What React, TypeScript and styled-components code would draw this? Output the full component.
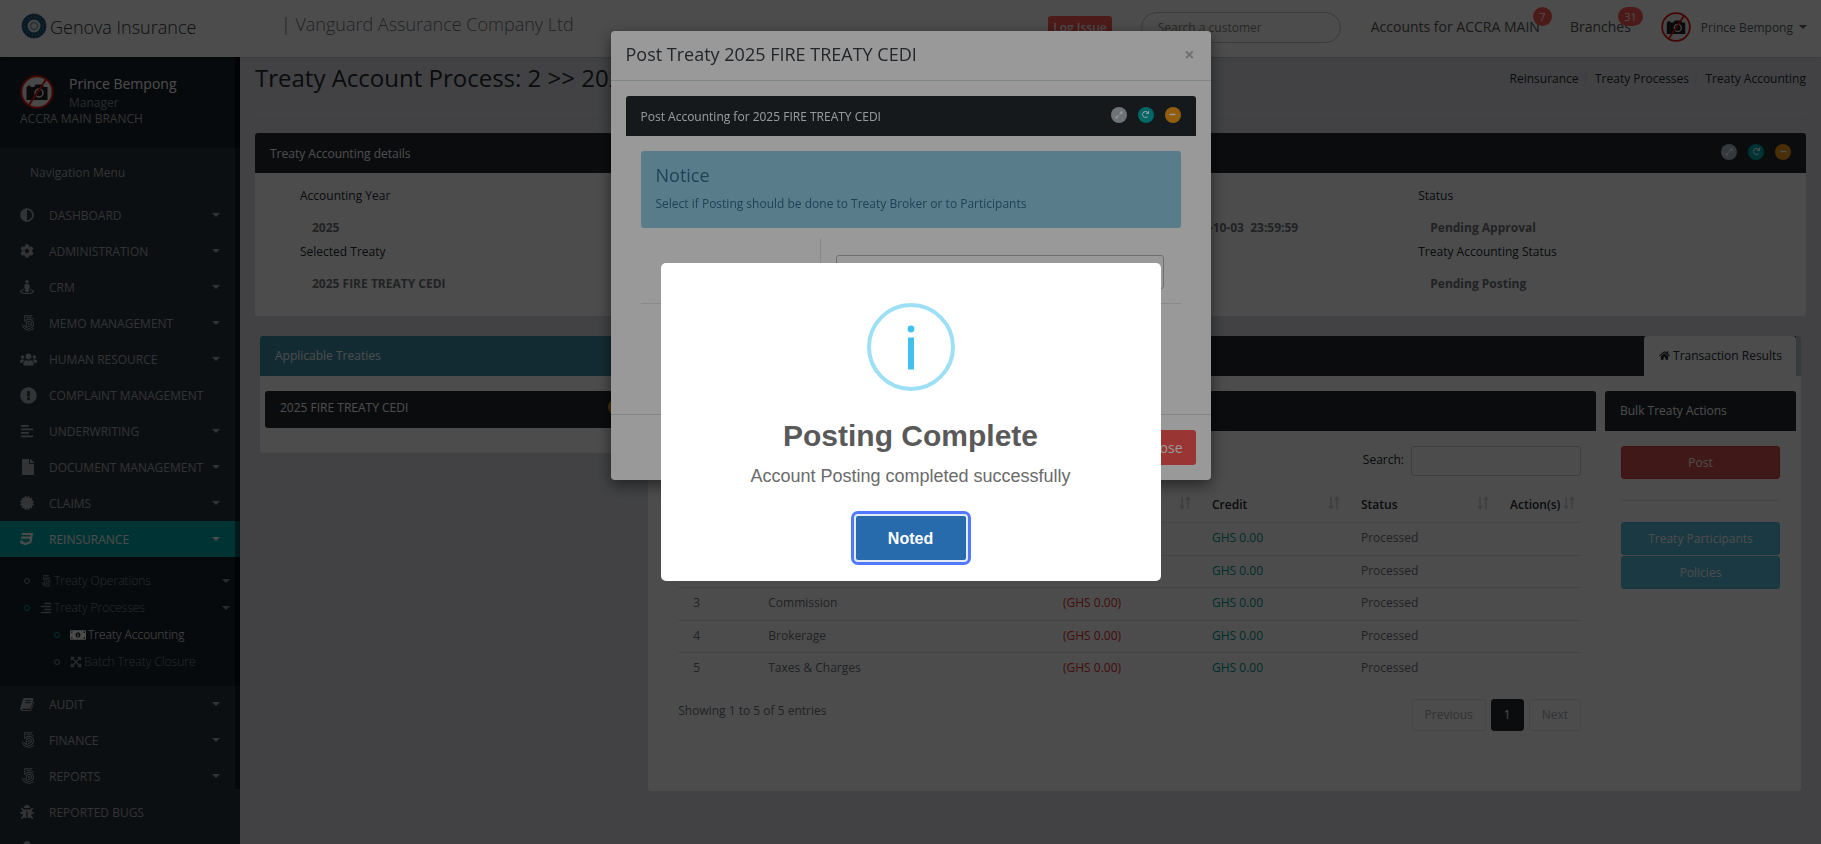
import React from "react";
import styled, { createGlobalStyle, css } from "styled-components";
import {
  Fa500Px,
  FaAdjust,
  FaAlignLeft,
  FaAlignRight,
  FaBug,
  FaCertificate,
  FaCog,
  FaCss3,
  FaExclamationCircle,
  FaExpandAlt,
  FaExpandArrowsAlt,
  FaFile,
  FaHome,
  FaMinus,
  FaMoneyBillAlt,
  FaRedo,
  FaStreetView,
  FaUser,
  FaUsers,
} from "react-icons/fa";

const GlobalStyle = createGlobalStyle`
  *, *::before, *::after { box-sizing: border-box; }
  body {
    margin: 0;
    background: #dcdfe4;
    color: #707478;
    font-family: "Open Sans", "Liberation Sans", sans-serif;
    font-size: 12px;
    line-height: 17px;
  }
  a { color: inherit; text-decoration: none; }
  button, input, select { font: inherit; }
  ul, ol { list-style: none; margin: 0; padding: 0; }
  h1, h2, h3, h4, p, dl, dd, hr { margin: 0; }
`;

/* ---------- page frame ---------- */

const Page = styled.div`
  display: flex;
  flex-direction: column;
  height: 100vh;
  overflow: hidden;
`;

const Header = styled.header`
  display: flex;
  align-items: center;
  flex: none;
  height: 57px;
  padding: 0 14px 3px 21px;
  background: #fff;
  box-shadow: 0 0 2px rgba(0, 0, 0, 0.3);
  z-index: 1;
`;

const Brand = styled.a`
  display: flex;
  align-items: center;
  gap: 3px;
  width: 260px;
  color: #333;
  font-size: 18px;
  font-weight: 300;
  line-height: 25px;
  svg { margin-bottom: 3px; }
`;

const Company = styled.div`
  flex: 1;
  padding-bottom: 5px;
  color: #707478;
  font-size: 18px;
  font-weight: 300;
  line-height: 25px;
`;

const LogIssue = styled.button`
  height: 22px;
  padding: 0 5px;
  border: 0;
  border-radius: 3px;
  background: #ff5b57;
  color: #fff;
  font-weight: 600;
`;

const CustomerSearch = styled.input`
  width: 200px;
  height: 31px;
  margin: 0 30px 0 29px;
  padding: 0 16px;
  border: 1px solid #c0c4c8;
  border-radius: 16px;
  background: #fff;
  color: #555;
  &::placeholder { color: #888; opacity: 1; }
`;

const HeaderLink = styled.a`
  position: relative;
  margin-right: 30px;
  color: #555;
  font-size: 14px;
  line-height: 20px;
`;

const Badge = styled.span`
  position: absolute;
  top: -10px;
  right: -12px;
  min-width: 19px;
  padding: 0 6px;
  border-radius: 10px;
  background: #ff5b57;
  color: #fff;
  font-size: 11px;
  line-height: 19px;
  text-align: center;
`;

const UserMenu = styled.button`
  display: flex;
  align-items: center;
  padding: 0;
  border: 0;
  background: none;
  color: #585f66;
  span { margin: 0 6px 0 10px; }
`;

const Caret = styled.i`
  border: 4px solid transparent;
  border-top-color: currentColor;
  border-bottom: 0;
`;

const Main = styled.div`
  display: flex;
  flex: 1;
  min-height: 0;
`;

/* ---------- sidebar ---------- */

const Sidebar = styled.aside`
  position: relative;
  flex: none;
  width: 240px;
  overflow: hidden;
  background: #28353c;
  color: #a8acb1;
`;

const ScrollThumb = styled.div`
  position: absolute;
  top: 0;
  right: 0;
  width: 5px;
  height: 93%;
  background: rgba(0, 0, 0, 0.5);
`;

const Profile = styled.div`
  height: 91px;
  padding: 17px 20px 0;
  background: #1a2229;
`;

const ProfileTop = styled.div`
  display: flex;
  gap: 15px;
  height: 36px;
  color: #889097;
  strong {
    display: block;
    color: #fff;
    font-size: 14px;
    font-weight: 400;
    line-height: 20px;
  }
  svg { margin-top: 1px; }
`;

const NavTitle = styled.div`
  padding: 16px 30px;
`;

const NavLink = styled.a<{ $active?: boolean }>`
  display: flex;
  align-items: center;
  height: 36px;
  padding: 0 20px;
  white-space: nowrap;
  ${(p) => p.$active && css`background: #00acac; color: #fff;`}
  > span { flex: 1; }
`;

const NavIcon = styled.i`
  display: flex;
  flex: none;
  width: 29px;
`;

const SubMenu = styled.ul`
  padding: 10px 0 11px 27px;
  background: #1a2229;
  > ul { margin-left: 30px; }
`;

const SubLink = styled.a<{ $current?: boolean; $open?: boolean }>`
  display: flex;
  align-items: center;
  gap: 2px;
  height: 27px;
  padding-right: 10px;
  color: ${(p) => (p.$current ? "#fff" : "#889097")};
  font-weight: 300;
  &::before {
    content: "";
    width: 6px;
    height: 6px;
    margin: 0 8px 0 -3px;
    border: 1px solid ${(p) => (p.$current || p.$open ? "#00acac" : "#889097")};
    border-radius: 50%;
  }
  > span { flex: 1; }
`;

/* ---------- content ---------- */

const Content = styled.main`
  flex: 1;
  min-width: 0;
  padding: 4px 15px 0;
`;

const PageTop = styled.div`
  display: flex;
  justify-content: space-between;
  height: 53px;
  margin-bottom: 19px;
  border-bottom: 1px solid #e2e7eb;
  h1 {
    color: #242a30;
    font-size: 24px;
    font-weight: 400;
    line-height: 33px;
  }
`;

const Breadcrumb = styled.ol`
  display: flex;
  padding-top: 9px;
  color: #242a30;
  li + li::before {
    content: "/";
    padding: 0 7px 0 5px;
    color: #c5ccd3;
  }
`;

const Panel = styled.section`
  border-radius: 3px;
  background: #fff;
`;

const PanelHeading = styled.header<{ $tone?: string }>`
  display: flex;
  align-items: center;
  justify-content: space-between;
  height: 40px;
  padding: 0 15px;
  border-radius: 3px 3px 0 0;
  background: ${(p) => p.$tone || "#242a30"};
  color: #fff;
  h3 { font-size: 12px; font-weight: 400; }
`;

const Tools = styled.div`
  display: flex;
  gap: 11px;
  padding-bottom: 3px;
`;

const ToolButton = styled.button<{ $color: string }>`
  display: grid;
  place-items: center;
  width: 16px;
  height: 16px;
  padding: 0;
  border: 0;
  border-radius: 50%;
  background: ${(p) => p.$color};
  color: #fff;
`;

const Details = styled.dl`
  display: grid;
  grid-template-columns: repeat(4, 1fr);
  height: 143px;
  margin-bottom: 20px;
  padding: 14px 15px 0 45px;
  dt { height: 30px; color: #242a30; line-height: 18px; }
  dd { height: 26px; padding-left: 12px; font-weight: 700; line-height: 22px; white-space: pre; }
`;

const Columns = styled.div`
  display: grid;
  grid-template-columns: minmax(0, 1fr) minmax(0, 3fr);
  align-items: start;
  gap: 4px;
  padding: 0 5px;
  ${PanelHeading} { padding-bottom: 1px; }
`;

const TreatyList = styled.div`
  padding: 15px 5px 25px;
`;

const TreatyItem = styled.div`
  display: flex;
  justify-content: space-between;
  height: 37px;
  padding: 8px 15px;
  border-radius: 3px;
  background: #242a30;
  color: #fff;
`;

const TabBar = styled.header`
  display: flex;
  height: 40px;
  padding-right: 5px;
  border-radius: 3px 3px 0 0;
  background: linear-gradient(to left, #b5c6c9 5px, #242a30 5px);
  justify-content: flex-end;
`;

const Tab = styled.a`
  display: flex;
  align-items: center;
  gap: 3px;
  padding: 0 14px 1px 15px;
  border-radius: 3px 3px 0 0;
  background: #fff;
  color: #242a30;
`;

const Results = styled.div`
  display: grid;
  grid-template-columns: minmax(0, 1fr) 191px;
  gap: 9px;
  height: 415px;
  padding: 15px 5px 0 15px;
`;

const ResultsBody = styled.div`
  padding: 15px;
`;

const TableSearch = styled.label`
  display: flex;
  justify-content: flex-end;
  gap: 7px;
  height: 42px;
  color: #242a30;
  line-height: 27px;
  input {
    width: 170px;
    height: 30px;
    padding: 0 10px;
    border: 1px solid #ccd0d4;
    border-radius: 3px;
    background: #fff;
  }
`;

const Table = styled.table`
  width: 100%;
  border-collapse: collapse;
  table-layout: fixed;
  th, td { padding: 0 15px; text-align: left; }
  th {
    height: 34px;
    padding-right: 6px;
    border-bottom: 1px solid #e2e7eb;
    color: #242a30;
    font-weight: 600;
    white-space: nowrap;
  }
  td { padding-bottom: 2px; }
  tbody tr:nth-child(odd) td { height: 33px; }
  tbody tr:nth-child(even) td { height: 32px; }
  tbody tr + tr td { border-top: 1px solid #e2e7eb; }
`;

const HeadCell = styled.span`
  display: flex;
  align-items: center;
  justify-content: space-between;
  gap: 2px;
  svg { flex: none; margin-bottom: 3px; }
`;

const Amount = styled.td<{ $debit?: boolean }>`
  color: ${(p) => (p.$debit ? "#e0312d" : "#009a8e")};
`;

const TableFooter = styled.div`
  display: flex;
  justify-content: space-between;
  padding-top: 14px;
  line-height: 24px;
`;

const Pager = styled.nav`
  display: flex;
  gap: 5px;
`;

const PageButton = styled.button<{ $current?: boolean }>`
  height: 32px;
  padding: 0 12px;
  border: 1px solid #e2e7eb;
  border-radius: 3px;
  background: #fff;
  color: #a5a9ad;
  ${(p) => p.$current && css`border-color: #242a30; background: #242a30; color: #fff;`}
`;

const BulkBody = styled.div`
  display: flex;
  flex-direction: column;
  gap: 1px;
  padding: 15px 16px;
  hr { width: 100%; margin: 20px 0; border: 0; border-top: 1px solid #e2e7eb; }
`;

const BulkButton = styled.button<{ $danger?: boolean }>`
  height: 33px;
  border: 1px solid ${(p) => (p.$danger ? "#d43f3a" : "#46b8da")};
  border-radius: 3px;
  background: ${(p) => (p.$danger ? "#d9534f" : "#5bc0de")};
  color: #fff;
`;

/* ---------- post treaty dialog ---------- */

const Backdrop = styled.div`
  position: fixed;
  inset: 0;
  z-index: 10;
  display: flex;
  justify-content: center;
  align-items: flex-start;
  padding-top: 31px;
  background: rgba(0, 0, 0, 0.5);
`;

const Modal = styled.div`
  width: 600px;
  border-radius: 4px;
  background: #fff;
  box-shadow: 0 5px 15px rgba(0, 0, 0, 0.5);
`;

const ModalHeader = styled.header`
  display: flex;
  align-items: center;
  justify-content: space-between;
  height: 50px;
  padding: 0 16px 3px 15px;
  border-bottom: 1px solid #d5e0e2;
  h2 { color: #3a4046; font-size: 18px; font-weight: 400; line-height: 25px; }
`;

const CloseIcon = styled.button`
  padding: 0;
  border: 0;
  background: none;
  color: #bbb;
  font-size: 18px;
  font-weight: 700;
  line-height: 20px;
`;

const ModalBody = styled.div`
  height: 333px;
  padding: 15px;
`;

const ModalPanelBody = styled.div`
  padding: 15px;
`;

const Notice = styled.div`
  height: 77px;
  padding: 12px 15px;
  border-radius: 3px;
  background: #93cfe5;
  color: #31708f;
  h4 { margin-bottom: 7px; font-size: 18px; font-weight: 400; line-height: 25px; }
`;

const FormRow = styled.div`
  display: flex;
  height: 66px;
  margin-top: 10px;
  border-bottom: 1px solid #e2e7eb;
`;

const FormLabel = styled.label`
  width: 180px;
  padding: 22px 15px;
  border-right: 1px solid #e2e7eb;
  text-align: right;
`;

const FormField = styled.div`
  flex: 1;
  padding: 17px 17px 0 15px;
  select {
    width: 100%;
    height: 34px;
    border: 1px solid #b5babf;
    border-radius: 3px;
    background: #fff;
  }
`;

const ModalFooter = styled.footer`
  display: flex;
  justify-content: flex-end;
  padding: 15px;
  border-top: 1px solid #d5e0e2;
`;

const CloseButton = styled.button`
  height: 35px;
  padding: 0 13px;
  border: 0;
  border-radius: 3px;
  background: #ff5b57;
  color: #fff;
  font-size: 14px;
`;

/* ---------- completion alert ---------- */

const AlertLayer = styled.div`
  position: fixed;
  inset: 0;
  z-index: 20;
  display: grid;
  place-items: center;
  background: rgba(0, 0, 0, 0.4);
`;

const Alert = styled.div`
  display: flex;
  flex-direction: column;
  align-items: center;
  width: 500px;
  padding: 40px 20px 16px;
  border-radius: 5px;
  background: #fff;
  font-family: "Liberation Sans", Arial, sans-serif;
  h2 { margin-top: 27px; color: #595959; font-size: 30px; font-weight: 700; line-height: 36px; }
  p { margin: 12px 0 25px; color: #6a6a6a; font-size: 18px; line-height: 20px; }
`;

const NotedButton = styled.button`
  width: 110px;
  height: 44px;
  margin: 5px;
  border: 0;
  border-radius: 2px;
  outline: 3px solid #5278ff;
  outline-offset: 2px;
  background: #276bad;
  box-shadow: 0 0 0 2px #e3ebf5;
  color: #fff;
  font-size: 16px;
  font-weight: 700;
`;

/* ---------- drawings ---------- */

const Logo = () => (
  <svg width="26" height="26" viewBox="0 0 26 26" aria-hidden="true">
    <circle cx="13" cy="13" r="12" fill="#1f5577" stroke="#1f4a66" strokeWidth="1" strokeDasharray="2 1" />
    <circle cx="13" cy="13" r="9" fill="none" stroke="#4f88a8" strokeWidth="2" strokeDasharray="1 2" />
    <circle cx="13" cy="13" r="6.5" fill="#e2e8ec" />
    <circle cx="13" cy="13" r="3.5" fill="none" stroke="#8aa5b5" strokeWidth="1.5" />
  </svg>
);

const NoPhoto = ({ size }: { size: number }) => (
  <svg width={size} height={size} viewBox="0 0 34 34" aria-hidden="true">
    <circle cx="17" cy="17" r="15.5" fill="#f3f3f3" />
    <path d="M6.5 12h1V10.500h3V12H14l1.500-2.500h7L24 12h3.500v13h-21z" fill="#222" />
    <circle cx="19" cy="18" r="4" fill="none" stroke="#eee" strokeWidth="1.5" />
    <path d="M26 4.5 9 30" stroke="#e3120b" strokeWidth="2" />
    <circle cx="17" cy="17" r="15.7" fill="none" stroke="#e3120b" strokeWidth="2" />
  </svg>
);

const SlantedBook = ({ size }: { size?: number | string }) => (
  <svg width={size} height={size} viewBox="0 0 14 14" aria-hidden="true">
    <path d="M4.600 1h7.600c1 0 1.500.7 1.200 1.600l-2.400 8c-.2.800-.8 1.100-1.500 1.100H2.300c-.5 0-.7.5-.3.900.2.200.500.3.900.3h7.200c.5 0 .8-.2 1-.7l2.400-7.600c.6.500.5 1.100.3 1.700l-2.200 6.500c-.3.900-.9 1.200-1.700 1.200H2.400C.9 14-.2 12.500.3 11.100L3 2.200C3.300 1.400 3.800 1 4.600 1z" fill="currentColor" />
    <path d="M5.500 3.700h5.600M4.900 5.700h5.600" stroke="#28353c" strokeWidth=".9" />
  </svg>
);

const SortIcon = () => (
  <svg width="12" height="14" viewBox="0 0 12 14" fill="none" stroke="#cdd1d5" strokeWidth="1.5" aria-hidden="true">
    <path d="M3 1v11M1 10l2 2.5L5 10M9 13V2M7 4l2-2.5L11 4" />
  </svg>
);

const InfoIcon = () => (
  <svg width="88" height="88" viewBox="0 0 88 88" aria-hidden="true">
    <circle cx="44" cy="44" r="42" fill="none" stroke="#9de0f6" strokeWidth="4" />
    <circle cx="44" cy="26" r="3.400" fill="#3fc3ee" />
    <rect x="41" y="34.5" width="6" height="32" fill="#3fc3ee" />
  </svg>
);

const PanelTools = () => (
  <Tools>
    <ToolButton $color="#b6c2c9" aria-label="Expand"><FaExpandAlt size={8} /></ToolButton>
    <ToolButton $color="#00acac" aria-label="Reload"><FaRedo size={7} /></ToolButton>
    <ToolButton $color="#f59c1a" aria-label="Collapse"><FaMinus size={7} /></ToolButton>
  </Tools>
);

/* ---------- data ---------- */

const menu = [
  { label: "DASHBOARD", Icon: FaAdjust },
  { label: "ADMINISTRATION", Icon: FaCog },
  { label: "CRM", Icon: FaStreetView },
  { label: "MEMO MANAGEMENT", Icon: Fa500Px, size: 16 },
  { label: "HUMAN RESOURCE", Icon: FaUsers, size: 17 },
  { label: "COMPLAINT MANAGEMENT", Icon: FaExclamationCircle, size: 17, leaf: true },
  { label: "UNDERWRITING", Icon: FaAlignLeft },
  { label: "DOCUMENT MANAGEMENT", Icon: FaFile, size: 16 },
  { label: "CLAIMS", Icon: FaCertificate },
  { label: "REINSURANCE", Icon: FaCss3, active: true },
  { label: "AUDIT", Icon: SlantedBook },
  { label: "FINANCE", Icon: Fa500Px, size: 16 },
  { label: "REPORTS", Icon: Fa500Px, size: 16 },
  { label: "REPORTED BUGS", Icon: FaBug, leaf: true },
  { label: "", Icon: FaUser, leaf: true },
];

const entries = ["Premium", "Claims", "Commission", "Brokerage", "Taxes & Charges"];

const heads = ["#", "Type", "Debit", "Credit", "Status", "Action(s)"];

export default function App() {
  return (
    <>
      <GlobalStyle />
      <Page>
        <Header>
          <Brand href="#"><Logo />Genova Insurance</Brand>
          <Company>| Vanguard Assurance Company Ltd</Company>
          <LogIssue>Log Issue</LogIssue>
          <CustomerSearch aria-label="Search a customer" placeholder="Search a customer" />
          <HeaderLink href="#">Accounts for ACCRA MAIN<Badge>7</Badge></HeaderLink>
          <HeaderLink href="#">Branches<Badge>31</Badge></HeaderLink>
          <UserMenu><NoPhoto size={30} /><span>Prince Bempong</span><Caret /></UserMenu>
        </Header>

        <Main>
          <Sidebar>
            <Profile>
              <ProfileTop>
                <NoPhoto size={34} />
                <div><strong>Prince Bempong</strong>Manager</div>
              </ProfileTop>
              ACCRA MAIN BRANCH
            </Profile>
            <NavTitle>Navigation Menu</NavTitle>
            <ul>
              {menu.map(({ label, Icon, size, leaf, active }) => (
                <li key={label}>
                  <NavLink href="#" $active={active}>
                    <NavIcon><Icon size={size || 14} /></NavIcon><span>{label}</span>{!leaf && <Caret />}
                  </NavLink>
                  {active && (
                    <SubMenu>
                      <li><SubLink href="#"><Fa500Px size={12} /><span>Treaty Operations</span><Caret /></SubLink></li>
                      <li><SubLink href="#" $open><FaAlignRight size={12} /><span>Treaty Processes</span><Caret /></SubLink></li>
                      <ul>
                        <li><SubLink href="#" $current><FaMoneyBillAlt size={16} /><span>Treaty Accounting</span></SubLink></li>
                        <li><SubLink href="#"><FaExpandArrowsAlt size={12} /><span>Batch Treaty Closure</span></SubLink></li>
                      </ul>
                    </SubMenu>
                  )}
                </li>
              ))}
            </ul>
            <ScrollThumb />
          </Sidebar>

          <Content>
            <PageTop>
              <h1>Treaty Account Process: 2 &gt;&gt; 2025 FIRE TREATY CEDI</h1>
              <Breadcrumb>
                <li><a href="#">Reinsurance</a></li>
                <li><a href="#">Treaty Processes</a></li>
                <li><a href="#">Treaty Accounting</a></li>
              </Breadcrumb>
            </PageTop>

            <Panel>
              <PanelHeading><h3>Treaty Accounting details</h3><PanelTools /></PanelHeading>
              <Details>
                <div>
                  <dt>Accounting Year</dt><dd>2025</dd>
                  <dt>Selected Treaty</dt><dd>2025 FIRE TREATY CEDI</dd>
                </div>
                <div />
                <div>
                  <dt>Accounting Period</dt><dd>{"2025-07-03 00:00:00 - 2025-10-03  23:59:59"}</dd>
                </div>
                <div>
                  <dt>Status</dt><dd>Pending Approval</dd>
                  <dt>Treaty Accounting Status</dt><dd>Pending Posting</dd>
                </div>
              </Details>
            </Panel>

            <Columns>
              <Panel>
                <PanelHeading $tone="#3f92a8"><h3>Applicable Treaties</h3></PanelHeading>
                <TreatyList>
                  <TreatyItem>
                    2025 FIRE TREATY CEDI
                    <ToolButton $color="#f59c1a" aria-label="Open treaty"><FaMinus size={7} /></ToolButton>
                  </TreatyItem>
                </TreatyList>
              </Panel>

              <Panel>
                <TabBar><Tab href="#"><FaHome size={11} />Transaction Results</Tab></TabBar>
                <Results>
                  <section>
                    <PanelHeading><h3>Transactions</h3></PanelHeading>
                    <ResultsBody>
                      <TableSearch>Search:<input type="search" /></TableSearch>
                      <Table>
                        <colgroup>
                          <col width="75" /><col /><col width="149" /><col width="149" /><col width="149" /><col width="86" />
                        </colgroup>
                        <thead>
                          <tr>{heads.map((h) => <th key={h}><HeadCell>{h}<SortIcon /></HeadCell></th>)}</tr>
                        </thead>
                        <tbody>
                          {entries.map((name, i) => (
                            <tr key={name}>
                              <td>{i + 1}</td>
                              <td>{name}</td>
                              <Amount $debit>(GHS 0.00)</Amount>
                              <Amount>GHS 0.00</Amount>
                              <td>Processed</td>
                              <td />
                            </tr>
                          ))}
                        </tbody>
                      </Table>
                      <TableFooter>
                        Showing 1 to 5 of 5 entries
                        <Pager>
                          <PageButton>Previous</PageButton>
                          <PageButton $current>1</PageButton>
                          <PageButton>Next</PageButton>
                        </Pager>
                      </TableFooter>
                    </ResultsBody>
                  </section>
                  <section>
                    <PanelHeading><h3>Bulk Treaty Actions</h3></PanelHeading>
                    <BulkBody>
                      <BulkButton $danger>Post</BulkButton>
                      <hr />
                      <BulkButton>Treaty Participants</BulkButton>
                      <BulkButton>Policies</BulkButton>
                    </BulkBody>
                  </section>
                </Results>
              </Panel>
            </Columns>
          </Content>
        </Main>
      </Page>

      <Backdrop>
        <Modal role="dialog" aria-label="Post Treaty">
          <ModalHeader>
            <h2>Post Treaty 2025 FIRE TREATY CEDI</h2>
            <CloseIcon aria-label="Dismiss">×</CloseIcon>
          </ModalHeader>
          <ModalBody>
            <PanelHeading><h3>Post Accounting for 2025 FIRE TREATY CEDI</h3><PanelTools /></PanelHeading>
            <ModalPanelBody>
              <Notice>
                <h4>Notice</h4>
                <p>Select if Posting should be done to Treaty Broker or to Participants</p>
              </Notice>
              <FormRow>
                <FormLabel htmlFor="post-to">Post To</FormLabel>
                <FormField><select id="post-to" /></FormField>
              </FormRow>
            </ModalPanelBody>
          </ModalBody>
          <ModalFooter><CloseButton>Close</CloseButton></ModalFooter>
        </Modal>
      </Backdrop>

      <AlertLayer>
        <Alert role="alertdialog" aria-label="Posting Complete">
          <InfoIcon />
          <h2>Posting Complete</h2>
          <p>Account Posting completed successfully</p>
          <NotedButton>Noted</NotedButton>
        </Alert>
      </AlertLayer>
    </>
  );
}
